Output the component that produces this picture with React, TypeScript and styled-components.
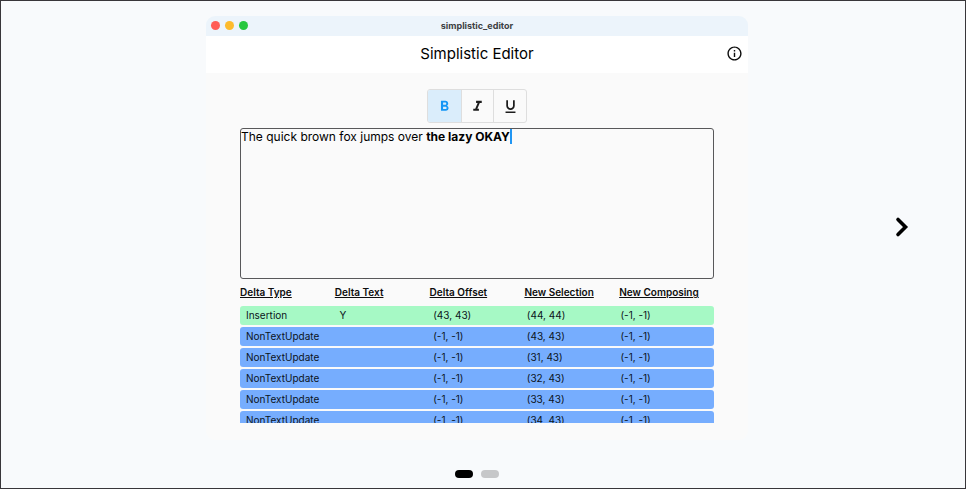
import React, { useState } from "react";
import styled, { createGlobalStyle } from "styled-components";
import {
  MdFormatBold,
  MdFormatItalic,
  MdFormatUnderlined,
  MdInfoOutline,
} from "react-icons/md";

const GlobalStyle = createGlobalStyle`
  *, *::before, *::after { box-sizing: border-box; }
  body { margin: 0; background: #f8fafc; color: #0d0d0d; font-family: Inter, "Liberation Sans", sans-serif; }
  button { font: inherit; color: inherit; padding: 0; border: 0; background: none; cursor: pointer; }
`;

const Carousel = styled.main`
  min-height: 100vh;
  padding: 15px 12px 10px 0;
  border: 1px solid #38363a;
  background: #f8fafc;
`;

const Slide = styled.div`
  display: grid;
  grid-template-columns: 205fr 542fr 205fr;
  align-items: center;
`;

const AppWindow = styled.section`
  grid-column: 2;
  min-width: 0;
  overflow: hidden;
  border-radius: 9px;
  background: #fafafa;
`;

const TitleBar = styled.div`
  display: grid;
  grid-template-columns: 1fr auto 1fr;
  align-items: center;
  height: 20px;
  padding: 0 5px 2px;
  background: #ecf4fb;
  color: #3d4043;
  font-size: 9px;
  font-weight: 700;
`;

const Lights = styled.div`
  display: flex;
  gap: 5px;
`;

const Light = styled.span<{ $color: string }>`
  width: 9px;
  height: 9px;
  border-radius: 50%;
  background: ${(p) => p.$color};
`;

const Header = styled.header`
  display: grid;
  grid-template-columns: 1fr auto 1fr;
  align-items: center;
  height: 37px;
  padding: 0 5px 2px;
  background: #fff;
`;

const Heading = styled.h1`
  grid-column: 2;
  margin: 0;
  color: #000;
  font-size: 15px;
  line-height: 20px;
  font-weight: 400;
`;

const InfoButton = styled.button`
  display: flex;
  justify-self: end;
  font-size: 17px;
`;

const Content = styled.div`
  display: flex;
  flex-direction: column;
  padding: 16px 34px 17px;
`;

const Toolbar = styled.div`
  display: grid;
  grid-template-columns: repeat(3, 1fr);
  align-self: center;
  width: 100px;
  overflow: hidden;
  margin-bottom: 5px;
  border: 1px solid #dedede;
  border-radius: 3px;
`;

const FormatButton = styled.button<{ $active: boolean }>`
  display: flex;
  align-items: center;
  justify-content: center;
  height: 32px;
  font-size: 17px;
  color: ${(p) => (p.$active ? "#1496f6" : "#1c1c1c")};
  background: ${(p) => (p.$active ? "#daedfb" : "transparent")};

  & + & {
    border-left: 1px solid #dedede;
  }
`;

const Editor = styled.div`
  height: 151px;
  border: 1px solid #58585a;
  border-radius: 3px;
  color: #000;
  font-size: 12px;
  line-height: 15px;
  outline: none;
`;

const Caret = styled.span`
  display: inline-block;
  width: 2px;
  height: 15px;
  vertical-align: top;
  background: #2196f3;
`;

const DeltaTable = styled.table`
  display: block;
  height: 144px;
  overflow: hidden;
  font-size: 10px;
  line-height: 19px;
`;

const HeadGroup = styled.thead`
  display: block;
  padding: 4px 0;
`;

const BodyGroup = styled.tbody`
  display: grid;
  gap: 2px;
`;

const HeadRow = styled.tr`
  display: grid;
  grid-template-columns: repeat(5, 1fr);
`;

const DeltaRow = styled(HeadRow)<{ $kind: string }>`
  padding-left: 6px;
  border-radius: 3px;
  background: ${(p) => (p.$kind === "Insertion" ? "#a6f9c5" : "#76adfe")};
`;

const HeadCell = styled.th`
  padding: 0;
  text-align: left;
  font-weight: 600;
  text-decoration: underline;
`;

const Cell = styled.td`
  padding: 0;
  color: #0c141c;
  font-weight: 400;
`;

const NextButton = styled.button`
  justify-self: end;
  display: flex;
  margin: 0 42px 2px 0;
`;

const Dots = styled.div`
  display: flex;
  justify-content: center;
  gap: 8px;
  margin-top: 30px;
`;

const Dot = styled.button<{ $active: boolean }>`
  width: 18px;
  height: 8px;
  border-radius: 4px;
  background: ${(p) => (p.$active ? "#000" : "#c6c7c9")};
`;

const formats = [
  { name: "Bold", Icon: MdFormatBold },
  { name: "Italic", Icon: MdFormatItalic },
  { name: "Underline", Icon: MdFormatUnderlined },
];

const columns = [
  "Delta Type",
  "Delta Text",
  "Delta Offset",
  "New Selection",
  "New Composing",
];

const deltas = [
  ["Insertion", "Y", "(43, 43)", "(44, 44)", "(-1, -1)"],
  ["NonTextUpdate", "", "(-1, -1)", "(43, 43)", "(-1, -1)"],
  ["NonTextUpdate", "", "(-1, -1)", "(31, 43)", "(-1, -1)"],
  ["NonTextUpdate", "", "(-1, -1)", "(32, 43)", "(-1, -1)"],
  ["NonTextUpdate", "", "(-1, -1)", "(33, 43)", "(-1, -1)"],
  ["NonTextUpdate", "", "(-1, -1)", "(34, 43)", "(-1, -1)"],
];

export default function App() {
  const [format, setFormat] = useState("Bold");
  const [slide, setSlide] = useState(0);

  return (
    <>
      <GlobalStyle />
      <Carousel>
        <Slide>
          <AppWindow>
            <TitleBar>
              <Lights>
                <Light $color="#ff5c56" />
                <Light $color="#fdbb2d" />
                <Light $color="#27c83f" />
              </Lights>
              <span>simplistic_editor</span>
            </TitleBar>
            <Header>
              <Heading>Simplistic Editor</Heading>
              <InfoButton type="button" aria-label="About">
                <MdInfoOutline />
              </InfoButton>
            </Header>
            <Content>
              <Toolbar role="toolbar" aria-label="Text style">
                {formats.map(({ name, Icon }) => (
                  <FormatButton
                    key={name}
                    type="button"
                    aria-label={name}
                    aria-pressed={format === name}
                    $active={format === name}
                    onClick={() => setFormat(name)}
                  >
                    <Icon />
                  </FormatButton>
                ))}
              </Toolbar>
              <Editor
                role="textbox"
                aria-label="Document"
                aria-multiline="true"
                contentEditable
                suppressContentEditableWarning
              >
                The quick brown fox jumps over <b>the lazy OKAY</b>
                <Caret />
              </Editor>
              <DeltaTable>
                <HeadGroup>
                  <HeadRow>
                    {columns.map((c) => (
                      <HeadCell key={c} scope="col">
                        {c}
                      </HeadCell>
                    ))}
                  </HeadRow>
                </HeadGroup>
                <BodyGroup>
                  {deltas.map((row, i) => (
                    <DeltaRow key={i} $kind={row[0]}>
                      {row.map((value, j) => (
                        <Cell key={j}>{value}</Cell>
                      ))}
                    </DeltaRow>
                  ))}
                </BodyGroup>
              </DeltaTable>
            </Content>
          </AppWindow>
          <NextButton
            type="button"
            aria-label="Next slide"
            onClick={() => setSlide(1 - slide)}
          >
            <svg width="18" height="22" viewBox="0 0 18 22" fill="none">
              <path
                d="M5 3.5 12.5 11 5 18.5"
                stroke="#000"
                strokeWidth="3.6"
                strokeLinecap="round"
              />
            </svg>
          </NextButton>
        </Slide>
        <Dots>
          {[0, 1].map((n) => (
            <Dot
              key={n}
              type="button"
              aria-label={`Slide ${n + 1}`}
              $active={slide === n}
              onClick={() => setSlide(n)}
            />
          ))}
        </Dots>
      </Carousel>
    </>
  );
}
